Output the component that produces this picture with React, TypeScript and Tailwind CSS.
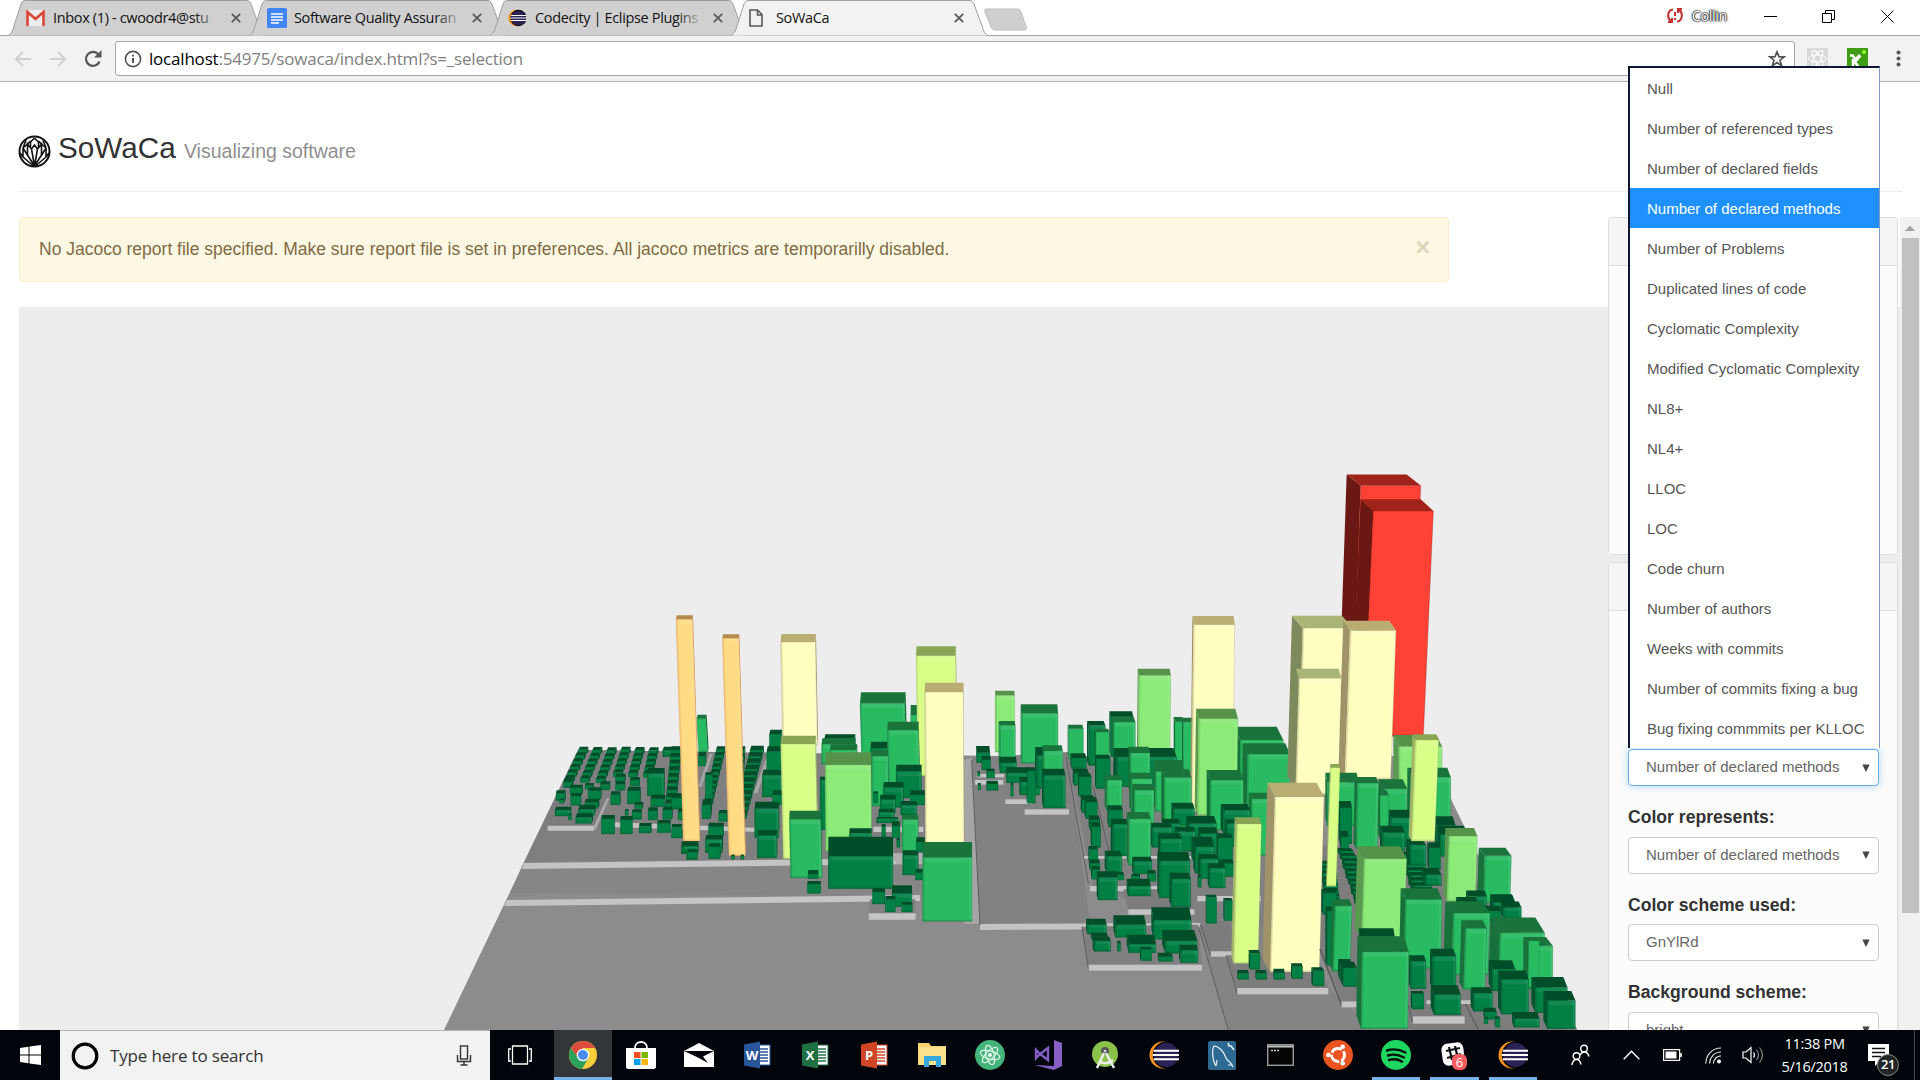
import React from "react";

type Kind = "D" | "G" | "L" | "Y" | "C" | "K" | "O" | "R";
// [x, y, width, height, roof height, roof shift, kind, lean of the foot]
type Box = [number, number, number, number, number, number, Kind, number?];

const tone: Record<Kind, [string, string, string]> = {
  D: ["#008045", "#004d29", "#00552f"],
  G: ["#29bb62", "#1a733b", "#17713a"],
  L: ["#8bea78", "#56924a", "#5a9a50"],
  Y: ["#d9ff88", "#8aa556", "#a3b468"],
  C: ["#ffffc0", "#b9ad74", "#a0936a"],
  K: ["#ffffc2", "#aab577", "#7f8a5c"],
  O: ["#ffdc84", "#b58c50", "#d9975c"],
  R: ["#ff4235", "#a0231b", "#6b1814"],
};

function Building({ b }: { b: Box }) {
  const [x, y, w, h, t, dx, k, lean = 0] = b;
  const [front, roof, side] = tone[k];
  const f = y + h;
  const foot = f - t * 0.9;
  const sx = dx < 0 ? x : x + w;
  const big = w > 45 && k !== "R";
  return (
    <g>
      <polygon fill={side} points={`${sx},${y} ${sx + dx},${y - t} ${sx + dx + lean},${foot} ${sx + lean},${f}`} />
      <polygon fill={front} stroke={side} strokeWidth="1.2" strokeOpacity="0.7" points={`${x},${y} ${x + w},${y} ${x + w + lean},${f} ${x + lean},${f}`} />
      {big && <polygon fill="#fff" fillOpacity="0.07" points={`${x + 4},${y + 2} ${x + w - 2},${y + 2} ${x + w - 2},${y + Math.min(14, h / 3)} ${x + 4},${y + Math.min(14, h / 3)}`} />}
      {big && <polygon fill="#fff" fillOpacity="0.09" points={`${x + w - 7},${y + 2} ${x + w - 1},${y + 2} ${x + w - 1 + lean},${f - 2} ${x + w - 7 + lean},${f - 2}`} />}
      {big && <polygon fill={side} fillOpacity="0.28" points={`${x},${y} ${x + 5},${y} ${x + 5 + lean},${f} ${x + lean},${f}`} />}
      {w > 25 && <polygon fill={side} fillOpacity="0.3" points={`${x + lean},${f - 5} ${x + w + lean},${f - 5} ${x + w + lean},${f} ${x + lean},${f}`} />}
      <polygon fill={roof} points={`${x},${y} ${x + dx},${y - t} ${x + w + dx},${y - t} ${x + w},${y}`} />
    </g>
  );
}

const City = ({ items }: { items: Box[] }) => (
  <>
    {items.map((b, i) => (
      <Building key={i} b={b} />
    ))}
  </>
);

const field: Box[] = [];
for (let k = 0; k < 6; k++) {
  [175, 217, 260, 302, 344, 386].forEach((x, i) => {
    if (k > 5 - (i > 2 ? 1 : 0)) return;
    field.push([x - k * (8 - i * 0.8), 449 + k * 17 + (i % 3), 25, 13, 9, 5, "D"]);
  });
}
const lanes: Box[] = [];
for (let k = 0; k < 11; k++) {
  lanes.push([588 - k * 4, 449 + k * 17, 24, 14, 10, 4, "D"]);
  lanes.push([690 - k * 5, 450 + k * 19, 38, 16, 13, 4, "D"]);
  lanes.push([645 - k * 1, 450 + k * 20, 28, 15, 11, 3, "D"]);
  if (k < 9) lanes.push([452 - k * 2, 450 + k * 20, 30, 14, 11, 3, "D"]);
}

const west: Box[] = [
  ...field,
  [428, 450, 50, 20, 10, 4, "D"],
  [455, 455, 30, 30, 10, 2, "D"],
  [530, 356, 27, 100, 12, 3, "G", 6],
  ...lanes,
  [535, 468, 22, 30, 12, 2, "D"],
  [130, 545, 26, 18, 10, 4, "D"],
  [108, 580, 27, 22, 9, 2, "D"],
  [118, 600, 14, 10, 4, 1, "D"],
  [150, 563, 36, 20, 9, 3, "D"],
  [195, 556, 24, 12, 7, 3, "D"],
  [240, 553, 28, 17, 9, 3, "D"],
  [286, 530, 28, 16, 9, 3, "D"],
  [286, 553, 28, 18, 9, 2, "D"],
  [330, 540, 28, 18, 9, 2, "D"],
  [152, 588, 30, 28, 9, 2, "D"],
  [204, 572, 38, 26, 10, 3, "D"],
  [194, 607, 40, 18, 10, 4, "D"],
  [105, 630, 46, 18, 10, 3, "D"],
  [145, 645, 10, 15, 4, 0, "D"],
  [175, 628, 48, 18, 14, 4, "D"],
  [167, 652, 48, 18, 12, 4, "D"],
  [272, 584, 28, 30, 10, 2, "D"],
  [322, 572, 38, 40, 12, 2, "D"],
  [382, 520, 50, 68, 16, 2, "D"],
  [392, 596, 42, 24, 12, 2, "D"],
  [454, 594, 34, 34, 14, 2, "D"],
  [315, 632, 10, 14, 5, 0, "D"],
  [344, 614, 24, 12, 8, 2, "D"],
  [336, 636, 28, 22, 8, 2, "D"],
  [384, 632, 28, 28, 10, 2, "D"],
  [428, 630, 28, 28, 10, 2, "D"],
  [474, 635, 22, 25, 10, 2, "D"],
  [244, 656, 40, 46, 11, 1, "D"],
  [301, 660, 36, 42, 12, 1, "D"],
  [357, 679, 36, 20, 10, 2, "D"],
  [412, 670, 38, 28, 10, 2, "D"],
  [454, 682, 32, 32, 10, 1, "D"],
  [556, 524, 22, 72, 7, 1, "D"],
  [546, 614, 26, 42, 16, 3, "D"],
  [596, 640, 26, 24, 10, 2, "D"],
  [748, 402, 36, 50, 13, 3, "D"],
  [740, 455, 44, 62, 16, 3, "D"],
  [727, 525, 60, 66, 16, 3, "D"],
  [757, 584, 36, 30, 13, 2, "D"],
  [704, 625, 72, 88, 20, 2, "D"],
  [565, 680, 45, 30, 12, 2, "D"],
  [484, 740, 50, 22, 15, 1, "D"],
  [500, 756, 30, 22, 8, 1, "D"],
  [556, 718, 50, 40, 13, 3, "D"],
  [566, 740, 34, 36, 10, 2, "D"],
  [712, 706, 58, 68, 16, 2, "D"],
  [468, 58, 49, 665, 12, 2, "O", 22],
  [607, 115, 49, 652, 12, 2, "O", 20],
  [488, 738, 46, 20, 14, 1, "D"],
  [502, 756, 30, 22, 8, 1, "D"],
  [634, 768, 10, 10, 4, 0, "D"],
  [662, 768, 10, 10, 4, 0, "D"],
  [914, 414, 90, 60, 11, 2, "D"],
  [905, 432, 100, 60, 17, 2, "G"],
  [930, 450, 80, 50, 17, 2, "G"],
  [1020, 310, 134, 170, 33, 3, "G", 5],
  [1172, 345, 20, 60, 30, 0, "G"],
  [900, 540, 80, 150, 10, 0, "D"],
  [1052, 445, 50, 130, 20, 1, "D"],
  [1055, 468, 50, 150, 18, 1, "G"],
  [1188, 167, 118, 360, 28, 2, "Y", 6],
  [1102, 390, 93, 200, 25, 1, "G", 5],
  [1128, 514, 76, 80, 20, 1, "D"],
  [1090, 562, 60, 60, 16, 1, "D"],
  [1170, 585, 44, 30, 14, 1, "D"],
  [1080, 598, 46, 40, 14, 1, "D"],
  [1076, 636, 46, 26, 10, 1, "D"],
  [1142, 615, 48, 30, 12, 1, "D"],
  [1070, 655, 64, 14, 4, 0, "D"],
  [1060, 580, 14, 30, 6, 0, "D"],
  [1085, 680, 12, 36, 8, 0, "D"],
  [1116, 678, 24, 36, 14, 0, "D"],
  [1130, 720, 10, 22, 6, 0, "D"],
  [782, 126, 104, 310, 24, 2, "C", 6],
  [782, 432, 104, 344, 25, 2, "Y", 8],
  [915, 494, 138, 260, 37, 1, "L", 2],
  [1146, 658, 48, 100, 14, 1, "G"],
  [1148, 765, 46, 60, 14, 1, "D"],
  [988, 700, 66, 30, 15, 1, "D"],
  [1188, 726, 26, 30, 14, 1, "D"],
  [1186, 818, 30, 22, 12, 1, "D"],
  [808, 658, 94, 176, 26, 1, "G", 4],
  [864, 822, 30, 14, 12, 1, "D"],
  [862, 852, 40, 28, 9, 1, "D"],
  [925, 768, 194, 98, 58, 0, "D"],
  [1116, 880, 60, 40, 24, 0, "D"],
  [1057, 876, 38, 36, 12, 0, "D"],
  [1096, 898, 30, 38, 10, 0, "D"],
  [1145, 914, 32, 22, 8, 0, "D"],
  [1214, 276, 116, 470, 28, 1, "C", 2],
  [1208, 772, 148, 192, 46, 0, "G"],
];

const midBack: Box[] = [
  [106, 286, 58, 170, 14, -1, "L"],
  [118, 376, 48, 120, 13, -2, "G"],
  [184, 340, 110, 150, 27, -2, "G"],
  [50, 458, 40, 30, 20, -2, "D"],
  [66, 480, 26, 30, 12, -1, "D"],
  [52, 517, 8, 12, 4, 0, "D"],
  [80, 514, 24, 20, 8, -1, "D"],
  [54, 555, 8, 15, 6, 0, "D"],
  [80, 552, 34, 19, 10, -1, "D"],
  [120, 488, 50, 30, 18, -2, "D"],
  [140, 518, 66, 30, 16, -2, "D"],
  [152, 555, 8, 34, 8, 0, "D"],
  [180, 545, 60, 40, 14, -2, "D"],
  [230, 465, 60, 100, 24, -5, "D"],
  [250, 452, 58, 150, 16, -3, "G"],
  [202, 512, 24, 98, 10, -2, "D"],
  [250, 526, 66, 98, 20, -4, "D"],
  [326, 386, 44, 90, 12, -3, "G"],
  [386, 376, 50, 120, 13, -5, "D"],
  [408, 396, 40, 90, 10, -4, "G"],
  [452, 350, 68, 120, 16, -4, "D"],
  [460, 366, 66, 90, 14, -4, "G"],
  [536, 226, 96, 240, 20, -3, "L", -2],
  [645, 365, 26, 150, 14, -4, "G"],
  [670, 367, 40, 150, 14, -4, "G"],
  [840, 420, 130, 120, 40, -20, "G"],
  [335, 474, 44, 32, 14, -4, "D"],
  [342, 520, 44, 36, 14, -4, "D"],
  [358, 530, 36, 60, 10, -4, "D"],
  [409, 476, 42, 90, 12, -4, "D"],
  [470, 470, 180, 90, 26, -10, "D"],
  [700, 74, 124, 560, 26, -3, "C", -6],
  [510, 458, 60, 120, 18, -5, "G"],
  [586, 514, 86, 120, 34, -6, "G"],
  [612, 532, 82, 150, 24, -8, "G"],
  [862, 462, 128, 200, 32, -14, "G", -2],
  [716, 356, 118, 290, 30, -8, "L", -4],
  [514, 536, 62, 100, 18, -6, "G"],
  [440, 540, 46, 90, 14, -6, "G"],
  [522, 570, 60, 110, 18, -6, "G"],
  [750, 540, 100, 150, 30, -10, "G"],
  [874, 596, 66, 170, 18, -8, "G"],
];

const midFront: Box[] = [
  [366, 600, 38, 38, 14, -4, "D"],
  [378, 606, 34, 50, 14, -4, "D"],
  [390, 660, 30, 30, 14, -4, "D"],
  [396, 680, 26, 62, 14, -4, "D"],
  [446, 630, 42, 50, 14, -4, "D"],
  [458, 672, 46, 96, 16, -6, "D"],
  [640, 626, 64, 50, 18, -6, "D"],
  [790, 630, 80, 70, 18, -8, "D"],
  [800, 670, 50, 70, 12, -6, "D"],
  [610, 670, 50, 40, 14, -4, "D"],
  [576, 682, 60, 60, 14, -4, "D"],
  [686, 670, 84, 60, 22, -8, "D"],
  [650, 694, 56, 60, 14, -6, "D"],
  [600, 716, 66, 80, 16, -6, "D"],
  [720, 700, 54, 60, 18, -6, "D"],
  [506, 656, 66, 140, 20, -6, "G"],
  [700, 724, 60, 60, 14, -6, "D"],
  [706, 740, 56, 80, 18, -6, "D"],
  [774, 714, 44, 80, 14, -5, "D"],
  [720, 776, 54, 60, 14, -6, "D"],
  [782, 790, 40, 40, 12, -6, "D"],
  [388, 748, 26, 40, 10, -3, "D"],
  [390, 790, 30, 20, 12, -3, "D"],
  [396, 808, 24, 30, 10, -3, "D"],
  [440, 768, 46, 50, 16, -6, "D"],
  [520, 784, 56, 38, 14, -4, "D"],
  [470, 824, 22, 16, 8, -2, "D"],
  [564, 820, 24, 24, 10, -2, "D"],
  [514, 828, 26, 14, 6, 0, "D"],
  [598, 782, 92, 112, 26, -6, "D"],
  [748, 804, 48, 60, 14, -5, "D"],
  [714, 832, 10, 30, 8, -1, "D"],
  [414, 832, 58, 68, 18, -4, "D"],
  [504, 858, 68, 30, 22, -4, "D"],
  [634, 836, 58, 84, 18, -6, "D"],
  [740, 892, 30, 78, 8, -3, "D"],
  [794, 902, 24, 60, 8, -4, "D"],
  [382, 974, 58, 28, 18, -4, "D"],
  [396, 1010, 48, 10, 12, -4, "D"],
  [402, 1022, 50, 32, 12, -4, "D"],
  [466, 974, 92, 38, 28, -6, "D"],
  [472, 1030, 10, 24, 8, -1, "D"],
  [580, 960, 114, 58, 38, -6, "D"],
  [506, 1032, 82, 26, 28, -6, "D"],
  [616, 1022, 96, 38, 32, -10, "D"],
  [543, 1048, 32, 34, 8, -3, "D"],
  [596, 1070, 42, 14, 12, -3, "D"],
  [662, 1050, 52, 38, 16, -5, "D"],
];

const eastBack: Box[] = [
  [362, 70, 180, 640, 30, -42, "R", -24],
  [400, 140, 180, 620, 32, -38, "R", -30],
  [476, 788, 130, 130, 32, -16, "L"],
  [188, 462, 150, 440, 34, -32, "K", -14],
  [330, 468, 138, 410, 26, -20, "C", -16],
  [176, 600, 128, 320, 26, -8, "K", -10],
];

const eastLittle: Box[] = [];
for (let k = 0; k < 11; k++) {
  const j = (k * 7) % 5;
  eastLittle.push([300 + k * 5 + j, 1075 + k * 14, 40 + j, 10 + j, 8, -8, "D"]);
  eastLittle.push([246 + k * 2, 1110 + k * 15 - j, 40, 13, 8, -6, "D"]);
  eastLittle.push([488 + k * 5 + j, 1086 + k * 14, 56, 18 - j, 9, -8, "D"]);
}

const eastMid: Box[] = [
  [262, 886, 94, 120, 26, -6, "G"],
  [300, 956, 36, 100, 18, -4, "D"],
  [304, 1036, 22, 40, 16, -4, "D"],
  [430, 904, 72, 90, 26, -14, "G"],
  [420, 922, 26, 120, 14, -6, "G"],
  [352, 888, 64, 180, 16, -8, "G", -4],
  [512, 872, 120, 130, 26, -10, "G"],
  [452, 984, 60, 80, 22, -6, "D"],
  [590, 1004, 56, 60, 24, -8, "D"],
  [600, 1030, 80, 60, 24, -8, "D"],
  [428, 1024, 66, 50, 18, -8, "D"],
  ...eastLittle,
  [510, 1058, 48, 56, 16, -12, "D"],
  [568, 1066, 34, 60, 14, -6, "D"],
  [556, 1140, 48, 30, 18, -10, "D"],
  [526, 770, 70, 278, 16, -8, "Y", -12],
  [272, 846, 28, 326, 10, -2, "Y", -12],
];

const eastFront: Box[] = [
  [250, 1190, 40, 60, 10, -6, "D"],
  [626, 1034, 86, 180, 22, -10, "L", -6],
  [734, 1088, 80, 130, 22, -18, "G", -4],
  [684, 1200, 56, 30, 16, -6, "D"],
  [760, 1216, 66, 34, 22, -10, "D"],
  [790, 1230, 54, 30, 16, -8, "D"],
  [740, 1240, 44, 30, 14, -6, "D"],
  [652, 1214, 60, 20, 12, -4, "D"],
  [372, 1096, 128, 220, 34, -20, "L", -8],
  [496, 1208, 110, 190, 30, -14, "G", -4],
  [640, 1246, 110, 170, 32, -24, "G", -6],
  [780, 1300, 134, 140, 42, -28, "G", -6],
  [870, 1336, 68, 120, 24, -20, "G"],
  [866, 1322, 32, 130, 8, -4, "G", -2],
  [262, 1240, 20, 150, 12, -6, "D"],
  [284, 1226, 52, 180, 18, -8, "G", -6],
  [676, 1288, 64, 168, 22, -12, "G", -6],
  [756, 1400, 70, 60, 24, -10, "D"],
  [300, 1390, 36, 40, 18, -6, "D"],
  [310, 1396, 40, 52, 16, -8, "D"],
  [360, 1310, 104, 80, 22, -4, "D"],
  [512, 1378, 46, 76, 16, -6, "D"],
  [578, 1364, 70, 90, 20, -8, "D"],
  [516, 1468, 36, 42, 8, -4, "D"],
  [582, 1470, 80, 56, 26, -10, "D"],
  [700, 1466, 58, 50, 16, -8, "D"],
  [784, 1428, 82, 96, 24, -10, "D"],
  [886, 1450, 96, 70, 28, -12, "D"],
  [922, 1486, 84, 78, 26, -12, "D"],
  [734, 1518, 36, 20, 12, -4, "D"],
  [732, 1536, 12, 14, 5, 0, "D"],
  [766, 1536, 14, 24, 6, -2, "D"],
  [822, 1536, 76, 24, 18, -6, "D"],
  [366, 1352, 140, 212, 42, -14, "G", -3],
];

const towers: Box[] = [
  [830, 672, 74, 418, 20, -6, "Y", -10],
  [944, 590, 148, 526, 42, -22, "C", -14],
  [870, 1060, 30, 48, 10, -4, "D"],
  [834, 1120, 32, 18, 10, -2, "D"],
  [888, 1120, 32, 18, 10, -2, "D"],
  [942, 1118, 32, 20, 12, -2, "D"],
  [996, 1100, 32, 36, 10, -3, "D"],
  [1060, 1112, 32, 46, 10, -6, "D"],
];

function CityScene() {
  return (
    <svg className="block h-[723px] w-[1589px]" viewBox="19 307 1589 723">
      <rect x="18" y="307" width="1590" height="723" fill="#ededed" />
      <polygon fill="#8c8c8c" points="444,1030 578,750 1000,756 1430,756 1500,900 1580,1034" />
      <polygon fill="#868686" points="510,893 524,862 930,858 960,900 930,897" />
      <polygon fill="#7f7f7f" points="524,862 578,750 965,756 968,858" />
      <polygon fill="#828282" points="971,758 1068,752 1090,924 980,926" />
      <g fill="#c4c4c4">
        <polygon points="524,863 920,858 920,864 522,869" />
        <polygon points="507,900 920,895 920,901 504,906" />
        <polygon points="548,825 595,825 594,830 548,830" />
        <polygon points="610,822 760,828 760,832 610,827" />
        <polygon points="964,760 972,758 980,924 964,924" fill="#a5a5a5" />
        <polygon points="980,924 1200,923 1200,929 980,930" />
      </g>
      <g transform="translate(520 600) scale(.33333)">
        <polygon fill="#7c7c7c" points="105,590 260,595 222,680 82,680" />
        <polygon fill="#c4c4c4" points="83,677 222,677 222,692 83,692" />
        <polygon fill="#aaa" points="222,677 260,595 268,595 226,692" />
        <polygon fill="#a5a5a5" points="535,560 568,462 578,462 545,560" />
        <polygon fill="#a5a5a5" points="700,580 740,470 752,470 712,580" />
        <polygon fill="#818181" points="1050,898 1186,898 1186,942 1046,942" />
        <polygon fill="#c4c4c4" points="1046,940 1187,940 1187,959 1046,959" />
        <polygon fill="#c4c4c4" points="1060,680 1210,680 1210,696 1060,696" />
        <polygon fill="#b0b0b0" points="1110,760 1210,760 1210,792 1130,792" />
        <City items={west} />
      </g>
      <g transform="translate(960 600) scale(.33333)">
        <polygon fill="#848484" points="715,980 900,960 1350,1400 825,1350" />
        <polygon fill="#808080" points="318,460 900,560 1200,1000 720,970 400,860" />
        <path d="M318 470 385 850M400 560 470 850M35 480 60 975M715 980 805 1290" stroke="#5c5c5c" strokeWidth="3" fill="none" />
        <g fill="#c4c4c4">
          <rect x="45" y="540" width="85" height="14" />
          <rect x="50" y="522" width="82" height="10" />
          <rect x="136" y="598" width="80" height="14" />
          <rect x="194" y="628" width="133" height="16" />
          <rect x="390" y="858" width="210" height="16" />
          <rect x="372" y="768" width="340" height="8" />
          <rect x="712" y="888" width="190" height="16" />
        </g>
        <polygon fill="#7c7c7c" points="490,868 680,868 702,930 505,930" />
        <rect x="505" y="928" width="198" height="16" fill="#c4c4c4" />
        <polygon fill="#7f7f7f" points="366,980 715,974 726,1096 386,1098" />
        <path d="M366 980 386 1112" stroke="#5c5c5c" strokeWidth="3" />
        <rect x="386" y="1094" width="340" height="18" fill="#c4c4c4" />
        <polygon fill="#7c7c7c" points="722,975 800,960 850,1054 752,1054" />
        <rect x="752" y="1054" width="70" height="16" fill="#c4c4c4" />
        <path d="M722 975 752 1066" stroke="#5c5c5c" strokeWidth="3" />
        <City items={midBack} />
      </g>
      <g transform="translate(1240 460) scale(.33333 .36364)">
        <City items={eastBack} />
        <polygon fill="#7d7d7d" points="240,1340 240,1060 600,1060 800,1250 980,1568 520,1568 305,1492" />
        <City items={eastMid} />
      </g>
      <g transform="translate(960 600) scale(.33333)">
        <City items={midFront} />
        <polygon fill="#7c7c7c" points="798,1066 1074,1066 1104,1166 832,1166" />
        <path d="M798 1066 832 1182" stroke="#5c5c5c" strokeWidth="3" />
        <rect x="832" y="1164" width="273" height="19" fill="#c4c4c4" />
        <City items={towers} />
      </g>
      <g transform="translate(1240 460) scale(.33333 .36364)">
        <path d="M240 1345 305 1500" stroke="#555" strokeWidth="4" />
        <rect x="305" y="1489" width="50" height="16" fill="#c4c4c4" />
        <rect x="518" y="1530" width="156" height="20" fill="#c4c4c4" />
        <polygon fill="#c4c4c4" points="560,1486 700,1486 700,1496 560,1496" />
        <path d="M676 1496 716 1568M505 1500 518 1546" stroke="#555" strokeWidth="3" />
        <City items={eastFront} />
      </g>
    </svg>
  );
}

const Eclipse = ({ s }: { s: number }) => (
  <svg width={s} height={s} viewBox="0 0 32 32">
    <circle cx="15" cy="16" r="14.5" fill="#f7941e" />
    <circle cx="18.500" cy="16" r="14.500" fill="#05060c" />
    <circle cx="18.500" cy="16" r="13" fill="#2c2255" />
    <path d="M5 11.500h27M4 16h28M5 20.500h27" stroke="#fff" strokeWidth="2" />
  </svg>
);

const Gmail = () => (
  <svg width="19" height="16" viewBox="0 0 19 16">
    <rect width="19" height="16" rx="1" fill="#eee" />
    <path d="M1.500 16V2l8 7 8-7v14" fill="none" stroke="#d9463a" strokeWidth="2.700" />
  </svg>
);
const Docs = () => (
  <svg width="20" height="20" viewBox="0 0 20 20">
    <rect width="20" height="20" rx="1.500" fill="#4285f4" />
    <path d="M4 6h12M4 9h12M4 12h12M4 15h8" stroke="#fff" strokeWidth="1.500" />
  </svg>
);
const Page = () => (
  <svg width="14" height="18" viewBox="0 0 14 18" fill="none" stroke="#5a5a5a" strokeWidth="1.600">
    <path d="M1 1h7.500L13 5.500V17H1zM8.500 1v5H13" />
  </svg>
);

function Tab({ icon, title, active }: { icon: React.ReactNode; title: string; active?: boolean }) {
  return (
    <div className={active ? "relative z-10 -mr-[16px] h-9 w-[257px] shrink-0" : "relative -mr-[16px] h-9 w-[257px] shrink-0"}>
      <svg className="absolute inset-0" width="257" height="36" viewBox="0 0 257 36">
        <path d="M0 35.500C3 34 4 32 5 29L13 4C14 1.500 15 .5 18 .5H238C241 .5 242 1.500 243 4L252 29C253 32 254 34 257 35.500" fill={active ? "#f2f2f2" : "#d0d0d0"} stroke="#9f9f9f" />
      </svg>
      <div className="relative flex h-9 items-center pl-[18px] pr-[24px]">
        <span className="flex w-[27px] justify-start">{icon}</span>
        <span className="whitespace-nowrap text-[14.500px] tracking-[-0.35px] text-[#111]">{title}</span>
        <svg className="ml-auto" width="10" height="10" viewBox="0 0 10 10">
          <path d="M.8.8 9.200 9.200M9.200.8.8 9.200" stroke="#5a5a5a" strokeWidth="1.800" />
        </svg>
        {!active && <span className="absolute left-[186px] top-1 h-7 w-7 bg-linear-to-r from-transparent to-[#d0d0d0]" />}
      </div>
    </div>
  );
}

function Chrome() {
  return (
    <header className="font-['Open_Sans',sans-serif]">
      <div className="flex h-9 border-b border-[#a9a9a9] bg-white pl-[8px]">
        <Tab icon={<Gmail />} title="Inbox (1) - cwoodr4@stu" />
        <Tab icon={<Docs />} title="Software Quality Assuran" />
        <Tab icon={<Eclipse s={18} />} title="Codecity | Eclipse Plugins" />
        <Tab icon={<Page />} title="SoWaCa" active />
        <svg className="ml-[12px] mt-2" width="44" height="24" viewBox="0 0 44 24">
          <path d="M3 1h30c2 0 3 1 4 3l5 14c1 3 0 4-2 4H11c-2 0-3-1-4-3L1 4c-1-2 0-3 2-3z" fill="#cfcfcf" stroke="#bdbdbd" />
        </svg>
        <div className="ml-auto flex items-start pt-2">
          <svg className="mr-[9px]" width="16" height="15" viewBox="0 0 16 15" fill="none" stroke="#c23232" strokeWidth="2">
            <path d="M6 1.500C0 2 0 11 4 13M1 14h4v-4M10 13.500c6-.5 6-9.500 2-11.500M15 1h-4v4M8 4v4M8 10v2" />
          </svg>
          <span className="mr-[37px] text-[14.500px] leading-4 tracking-[-0.4px] text-white [text-shadow:0_0_2px_#000,0_0_2px_#000,0_0_1px_#000]">Collin</span>
          <svg className="mr-[45px] mt-[2px]" width="13" height="13" viewBox="0 0 13 13"><path d="M0 6.500h13" stroke="#000" /></svg>
          <svg className="mr-[46px] mt-[2px]" width="13" height="13" viewBox="0 0 13 13" fill="none" stroke="#000"><path d="M.5 3.500h9v9h-9zM3.500 3V.5h9v9H10" /></svg>
          <svg className="mr-[26px] mt-[2px]" width="13" height="13" viewBox="0 0 13 13"><path d="M.5.5l12 12M12.500.5l-12 12" stroke="#000" /></svg>
        </div>
      </div>
      <div className="flex h-[46px] items-center border-b border-[#b5b5b5] bg-[#f2f2f2] pl-[14px]">
        <svg width="18" height="16" viewBox="0 0 18 16" fill="none" stroke="#d0d0d0" strokeWidth="2"><path d="M17 8H2M9 1 2 8l7 7" /></svg>
        <svg className="ml-[17px]" width="18" height="16" viewBox="0 0 18 16" fill="none" stroke="#d0d0d0" strokeWidth="2"><path d="M1 8h15M9 1l7 7-7 7" /></svg>
        <svg className="ml-[17px]" width="18" height="18" viewBox="0 0 18 18"><path d="M15.500 11.500A7 7 0 1 1 14 4" fill="none" stroke="#555" strokeWidth="2.200" /><path d="M17.500 0v7.500H10z" fill="#555" /></svg>
        <div className="ml-[13px] flex h-[35px] w-[1680px] items-center rounded-[3px] border border-[#a6a6a6] bg-white pl-[8px] pr-2">
          <svg width="18" height="18" viewBox="0 0 18 18" fill="none" stroke="#555" strokeWidth="1.600"><circle cx="9" cy="9" r="7.600" /><path d="M9 8v5M9 4.800v1.700" strokeWidth="2" /></svg>
          <span className="ml-[7px] whitespace-nowrap text-[17px] tracking-[-0.2px] text-[#808080]"><span className="text-black">localhost</span>:54975/sowaca/index.html?s=_selection</span>
          <svg className="ml-auto" width="18" height="18" viewBox="0 0 18 18" fill="none" stroke="#555" strokeWidth="1.700"><path d="M9 1.800l2.100 5h5.100l-4.200 3.400 1.600 5.400L9 12.500l-4.600 3.100L6 10.200 1.800 6.800h5.100z" /></svg>
        </div>
        <svg className="ml-[12px]" width="21" height="21" viewBox="0 0 21 21" fill="none" stroke="#fff"><rect width="21" height="21" fill="#d9d9d9" stroke="none" /><ellipse cx="10.500" cy="10.500" rx="9" ry="3.500" /><ellipse cx="10.500" cy="10.500" rx="9" ry="3.500" transform="rotate(60 10.500 10.500)" /><ellipse cx="10.500" cy="10.500" rx="9" ry="3.500" transform="rotate(120 10.500 10.500)" /></svg>
        <svg className="ml-[19px]" width="21" height="21" viewBox="0 0 21 21"><rect width="21" height="21" fill="#3f9c14" /><path d="M3 7.500h2.500l3 4 4.500-4.500M6 11v10M13.500 7.500 8 14l5 7" stroke="#fff" strokeWidth="2.600" fill="none" /><circle cx="17" cy="4" r="2" fill="#9f3" /></svg>
        <svg className="ml-[28px]" width="5" height="17" viewBox="0 0 5 17" fill="#555"><circle cx="2.500" cy="2.500" r="2" /><circle cx="2.500" cy="8.500" r="2" /><circle cx="2.500" cy="14.500" r="2" /></svg>
      </div>
    </header>
  );
}

const options = [
  "Null",
  "Number of referenced types",
  "Number of declared fields",
  "Number of declared methods",
  "Number of Problems",
  "Duplicated lines of code",
  "Cyclomatic Complexity",
  "Modified Cyclomatic Complexity",
  "NL8+",
  "NL4+",
  "LLOC",
  "LOC",
  "Code churn",
  "Number of authors",
  "Weeks with commits",
  "Number of commits fixing a bug",
  "Bug fixing commmits per KLLOC",
];

function Select({ value, focus }: { value: string; focus?: boolean }) {
  return (
    <div className={focus ? "flex h-[37px] items-center justify-between rounded border border-[#66afe9] bg-white pl-[17px] pr-[8px] text-[15px] text-[#666] shadow-[0_0_8px_rgba(102,175,233,0.5)]" : "flex h-[37px] items-center justify-between rounded border border-[#ccc] bg-white pl-[17px] pr-[8px] text-[15px] text-[#666]"}>
      {value}
      <svg width="8" height="8" viewBox="0 0 8 8"><path d="M.3.5h7.400L4 8z" fill="#444" /></svg>
    </div>
  );
}

const Label = ({ children }: { children: string }) => (
  <div className="mb-[7.600px] mt-[20px] h-[23px] text-[17.600px] font-bold leading-[22px] text-[#333]">{children}</div>
);

function Cell({ children, on, hot }: { children: React.ReactNode; on?: boolean; hot?: boolean }) {
  return (
    <div className={hot ? "relative flex w-[58.100px] items-center justify-center bg-[#333639]" : "relative flex w-[58.100px] items-center justify-center"}>
      {children}
      {on && <span className={hot ? "absolute inset-x-0 bottom-0 h-[3px] bg-[#76b0e8]" : "absolute inset-x-[5px] bottom-0 h-[3px] bg-[#76b0e8]"} />}
    </div>
  );
}

function Office({ letter, color, dark }: { letter: string; color: string; dark: string }) {
  return (
    <svg width="28" height="28" viewBox="0 0 28 28">
      <rect x="14" y="4" width="13" height="20" fill="#fff" stroke={color} />
      <path d="M17 8h8M17 11h8M17 14h8M17 17h8M17 20h8" stroke={color} strokeWidth="1.300" />
      <path d="M1 3.500 17 .5v27L1 24.500z" fill={dark} />
      <text x="9" y="19" textAnchor="middle" fontFamily="Open Sans" fontWeight="700" fontSize="13" fill="#fff">{letter}</text>
    </svg>
  );
}

function Taskbar() {
  return (
    <footer className="flex h-[50px] bg-[#00040b] font-['Open_Sans',sans-serif] text-white">
      <div className="flex w-[60px] items-center justify-center">
        <svg width="21" height="20" viewBox="0 0 21 20" fill="#fff"><path d="M0 3l8.500-1.200v7.700H0zM9.500 1.600 21 0v9.500H9.500zM0 10.500h8.500v7.700L0 17zM9.500 10.500H21V20L9.500 18.400z" /></svg>
      </div>
      <div className="flex w-[430px] items-center border-t border-[#b5b5b5] bg-[#f2f2f2] pl-[11px] pr-[18px]">
        <svg width="28" height="28" viewBox="0 0 28 28"><circle cx="14" cy="14" r="11.800" fill="none" stroke="#000" strokeWidth="3.200" /></svg>
        <span className="ml-[11px] text-[17px] tracking-[-0.160px] text-[#333]">Type here to search</span>
        <svg className="ml-auto" width="16" height="21" viewBox="0 0 16 21" fill="none" stroke="#333" strokeWidth="1.400"><rect x="4.500" y="1" width="7" height="13" /><path d="M1.500 10v6.500h13V10M8 16.500V20M4.500 20h7" /></svg>
      </div>
      <div className="flex w-[64px] items-center justify-center pr-1">
        <svg width="24" height="20" viewBox="0 0 24 20" fill="none" stroke="#fff" strokeWidth="1.300"><path d="M4.500 1h15v18h-15zM3 4H.7v12H3M21 4h2.300v12H21" /></svg>
      </div>
      <Cell on hot>
        <svg width="28" height="28" viewBox="0 0 28 28"><circle cx="14" cy="14" r="14" fill="#fbcf3b" /><path d="M1.900 7A14 14 0 0 1 26.100 7H14l-6 9z" fill="#dd4b3e" /><path d="M1.900 7A14 14 0 0 0 13 28l6.500-11H9z" fill="#2aa15a" /><circle cx="14" cy="14" r="6.300" fill="#fff" /><circle cx="14" cy="14" r="5" fill="#4a8af4" /></svg>
      </Cell>
      <Cell>
        <svg width="30" height="30" viewBox="0 0 30 30"><path d="M9 8C9 0 21 0 21 8" fill="none" stroke="#fff" strokeWidth="1.800" /><path d="M0 8h30v19.500L28.500 29H1.500L0 27.500z" fill="#fff" /><path fill="#f05022" d="M8 12h6.500v6H8z" /><path fill="#7db700" d="M15.500 12H22v6h-6.500z" /><path fill="#00a1e9" d="M8 19h6.500v6H8z" /><path fill="#fdb813" d="M15.500 19H22v6h-6.500z" /></svg>
      </Cell>
      <Cell>
        <svg width="30" height="24" viewBox="0 0 30 24"><path d="M0 8 15 0l15 8v16H0z" fill="#fff" /><path d="M0 8h30L19 13.500l5 6.500-10-5.500z" fill="#00040b" /></svg>
      </Cell>
      <Cell><Office letter="W" color="#2b579a" dark="#2a5599" /></Cell>
      <Cell><Office letter="X" color="#217346" dark="#1f7044" /></Cell>
      <Cell><Office letter="P" color="#d24726" dark="#d04525" /></Cell>
      <Cell>
        <svg width="28" height="24" viewBox="0 0 28 24"><path d="M0 0h11l2 3h15v19H0z" fill="#f5d06c" /><path d="M1 4h27v18H1z" fill="#fde08a" /><path d="M6 24V13h17v11h-5v-6h-7v6z" fill="#36a8dc" /></svg>
      </Cell>
      <Cell>
        <svg width="30" height="30" viewBox="0 0 30 30" fill="none" stroke="#dff5e6" strokeWidth="1.200"><circle cx="15" cy="15" r="15" fill="#43b57c" stroke="none" /><ellipse cx="15" cy="15" rx="10" ry="4" transform="rotate(15 15 15)" /><ellipse cx="15" cy="15" rx="10" ry="4" transform="rotate(75 15 15)" /><ellipse cx="15" cy="15" rx="10" ry="4" transform="rotate(135 15 15)" /><circle cx="15" cy="15" r="1.500" fill="#fff" /></svg>
      </Cell>
      <Cell>
        <svg width="28" height="30" viewBox="0 0 28 30"><path d="M20 0l8 3v23l-8 4-20-5 20 1z" fill="#865fc5" /><path d="M2 10v8l4-4zM6 14l8-6v12z" fill="none" stroke="#865fc5" strokeWidth="2.400" /></svg>
      </Cell>
      <Cell>
        <svg width="28" height="30" viewBox="0 0 28 30"><circle cx="13" cy="14" r="13" fill="#8bc34a" /><circle cx="13" cy="11" r="4" fill="#555" /><path d="M12 13 5 28M14 13l8 15M7 21q7 5 14-1" fill="none" stroke="#eee" strokeWidth="2.500" /><circle cx="13" cy="11" r="1.300" fill="#ddd" /></svg>
      </Cell>
      <Cell><Eclipse s={30} /></Cell>
      <Cell>
        <svg width="28" height="29" viewBox="0 0 28 29"><rect width="28" height="29" rx="2" fill="#2d6a92" /><path d="M8 25C4 19 4 8 6 5c5 0 10 6 12 12 1 3 5 4 6 7l-4 0M8 25l1-6M24 24l1 2" fill="none" stroke="#e8f1f6" strokeWidth="1.200" /><path d="M20 2l1 3 2 0 3 4" fill="none" stroke="#e8f1f6" strokeWidth="1.600" /></svg>
      </Cell>
      <Cell>
        <svg width="27" height="22" viewBox="0 0 27 22"><rect x=".7" y=".7" width="25.600" height="20.600" fill="#050505" stroke="#9a9a9a" strokeWidth="1.400" /><path d="M1 2.500h25" stroke="#c5c5c5" strokeWidth="2" /><path d="M4 6.500h8" stroke="#ccc" strokeWidth="1.500" strokeDasharray="2 1" /></svg>
      </Cell>
      <Cell>
        <svg width="30" height="30" viewBox="0 0 30 30"><circle cx="15" cy="15" r="15" fill="#e95420" /><circle cx="15" cy="15" r="6.500" fill="none" stroke="#fff" strokeWidth="2.800" strokeDasharray="11.600 2" strokeDashoffset="5" /><g fill="#fff"><circle cx="5.500" cy="15" r="2.300" /><circle cx="19.700" cy="6.700" r="2.300" /><circle cx="19.700" cy="23.300" r="2.300" /></g></svg>
      </Cell>
      <Cell on>
        <svg width="30" height="30" viewBox="0 0 30 30"><circle cx="15" cy="15" r="15" fill="#1ed760" /><path d="M6 10.500q9-3 18.500 2M7 15.500q8-2.500 16 2M8 20q7-2 13 1.600" fill="none" stroke="#06110a" strokeWidth="2.400" strokeLinecap="round" /></svg>
      </Cell>
      <Cell on>
        <svg width="28" height="30" viewBox="0 0 28 30"><rect x="2" y="3" width="22" height="22" rx="6" fill="#fff" transform="rotate(-8 13 14)" /><path d="M9 7l3 13M15 6l3 13M6 11l14-3M7 18l14-4" stroke="#111" strokeWidth="2.200" /><rect x="12" y="14" width="15" height="16" rx="6" fill="#fb5d61" /><text x="19.500" y="27" textAnchor="middle" fontFamily="Open Sans" fontSize="13" fill="#fff">6</text></svg>
      </Cell>
      <Cell on><Eclipse s={30} /></Cell>
      <div className="ml-[29px] flex items-center">
        <svg width="19" height="22" viewBox="0 0 19 22" fill="none" stroke="#fff" strokeWidth="1.400"><circle cx="13" cy="4.500" r="3.300" /><circle cx="5.500" cy="12" r="3.300" /><path d="M.8 21Q2 15.500 5.500 15.500t4.500 5M9 11q2-3.500 5-3 3 .5 4 4.500" /></svg>
        <svg className="ml-[33px]" width="17" height="10" viewBox="0 0 17 10" fill="none" stroke="#fff" strokeWidth="1.400"><path d="M.7 9.300l7.800-8 7.800 8" /></svg>
        <svg className="ml-[23px]" width="19" height="12" viewBox="0 0 19 12"><rect x=".6" y=".6" width="16" height="10.800" fill="none" stroke="#fff" strokeWidth="1.200" /><rect x="2.500" y="2.500" width="11" height="7" fill="#fff" /><path d="M18 4v4" stroke="#fff" strokeWidth="1.600" /></svg>
        <svg className="ml-[23px]" width="17" height="17" viewBox="0 0 17 17" fill="none" stroke="#ddd" strokeWidth="1.200"><path d="M.8 16.500C1 8 7 1 16 1M4.500 16.500C5 10 9 5 16 5M8.300 16.500C9 12 12 9 16 8.800" /><circle cx="14" cy="14.500" r="2" fill="#fff" stroke="none" /></svg>
        <svg className="ml-[20px]" width="22" height="18" viewBox="0 0 22 18" fill="none" stroke="#fff" strokeWidth="1.200"><path d="M1 6h3l5-4.500v15L4 12H1zM11.500 6.500q2 2.500 0 5" /><path d="M14.500 4q4 5 0 10M17.500 1.500q6 7.500 0 15" stroke="#888" /></svg>
      </div>
      <div className="ml-[8px] w-[86px] pt-[2px] text-center text-[14.500px] leading-[23px] tracking-[-0.300px]">
        <div>11:38 PM</div>
        <div>5/16/2018</div>
      </div>
      <div className="relative ml-auto mr-[5px] w-[54px] border-r border-[#44484d]">
        <svg className="ml-[7px] mt-[14px]" width="21" height="22" viewBox="0 0 21 22"><path d="M0 0h21v17h-9l-5 5v-5H0z" fill="#fff" /><path d="M4 4.500h13M4 8.500h13M4 12.500h9" stroke="#111" strokeWidth="1.300" /></svg>
        <span className="absolute left-[16px] top-[24px] flex h-[22px] w-[22px] items-center justify-center rounded-full border border-[#888] bg-[#222527] text-[13px] font-semibold tracking-[-0.5px]">21</span>
      </div>
    </footer>
  );
}

export default function App() {
  return (
    <div className="relative flex h-[1080px] w-[1920px] flex-col overflow-hidden bg-white font-['Liberation_Sans',sans-serif]">
      <Chrome />
      <main className="flex h-[948px] flex-col">
        <div className="ml-[19px] mr-[18px] flex h-[110px] items-start border-b border-[#eee] pt-[48px]">
          <svg className="-ml-px mt-[5px]" width="33" height="33" viewBox="0 0 33 33" fill="none" stroke="#111" strokeWidth="1.600">
            <circle cx="16.500" cy="16.500" r="15" strokeWidth="2" />
            <path d="M16.500 31 13.500 14 16.500 10 19.500 14zM16.500 31 9.500 20V9l4 5M16.500 31l7-11V9l-4 5M16.500 3l-4 4v5M16.500 3l4 4v5M9.500 9 12.500 6M23.500 9l-3-3M15.500 31 5 22V13l4.500-4M17.500 31 28 22V13l-4.500-4M5 13l5 8M28 13l-5 8M2 18l3 4M31 18l-3 4M5 13 8 5M28 13 25 5" />
          </svg>
          <h1 className="ml-[7px] text-[29.700px] leading-[36px] text-[#333]">
            SoWaCa <small className="text-[19.500px] text-[#8f8f8f]">Visualizing software</small>
          </h1>
        </div>
        <div className="flex h-[838px] pl-[19px] pt-[25px]">
          <section className="w-[1589px]">
            <div className="mb-[25px] flex h-[65px] w-[1430px] items-center justify-between rounded border border-[#faebcc] bg-[#fcf8e3] pl-[19px] pr-[18px] text-[17.500px] text-[#7f6b45]">
              No Jacoco report file specified. Make sure report file is set in preferences. All jacoco metrics are temporarilly disabled.
              <span className="pb-1 text-[25px] font-bold text-[#dcd6bf]">×</span>
            </div>
            <CityScene />
          </section>
          <aside className="flex h-[813px] w-[290px] flex-col">
            <div className="h-[338px] shrink-0 rounded border border-[#ddd] bg-[#fcfcfc]"><div className="h-[48px] rounded-t border-b border-[#ddd] bg-[#f5f5f5]" /></div>
            <div className="h-[7px] shrink-0 bg-[#ededed]" />
            <div className="h-[468px] overflow-hidden rounded-t border border-b-0 border-[#ddd] bg-[#fcfcfc]">
              <div className="h-[48px] border-b border-[#ddd] bg-[#f5f5f5]" />
              <div className="ml-[19px] mt-[138px] w-[251px]">
                <Select value="Number of declared methods" focus />
                <Label>Color represents:</Label>
                <Select value="Number of declared methods" />
                <Label>Color scheme used:</Label>
                <Select value="GnYlRd" />
                <Label>Background scheme:</Label>
                <Select value="bright" />
              </div>
            </div>
          </aside>
          <div className="mt-[90px] h-[723px] w-[2px] bg-[#ededed]" />
          <div className="h-[813px] w-[20px] bg-[#f1f1f1] px-[1px] pt-[8px]">
            <svg className="mx-auto" width="10" height="6" viewBox="0 0 10 6"><path d="M0 6l5-5.500L10 6z" fill="#a0a0a0" /></svg>
            <div className="ml-px mt-[7px] h-[675px] bg-[#c1c1c1]" />
          </div>
        </div>
      </main>
      <Taskbar />
      <ul className="absolute left-[1628px] top-[66px] z-20 w-[252px] border-l-2 border-r border-t-2 border-[#0b1733] border-r-[#7f9bc4] bg-white text-[15px] leading-[42px] text-[#555]">
        {options.map((o) => (
          <li key={o} className={o === "Number of declared methods" ? "h-10 whitespace-nowrap bg-[#1e90ff] pl-[17px] text-white" : "h-10 whitespace-nowrap pl-[17px]"}>{o}</li>
        ))}
      </ul>
    </div>
  );
}
